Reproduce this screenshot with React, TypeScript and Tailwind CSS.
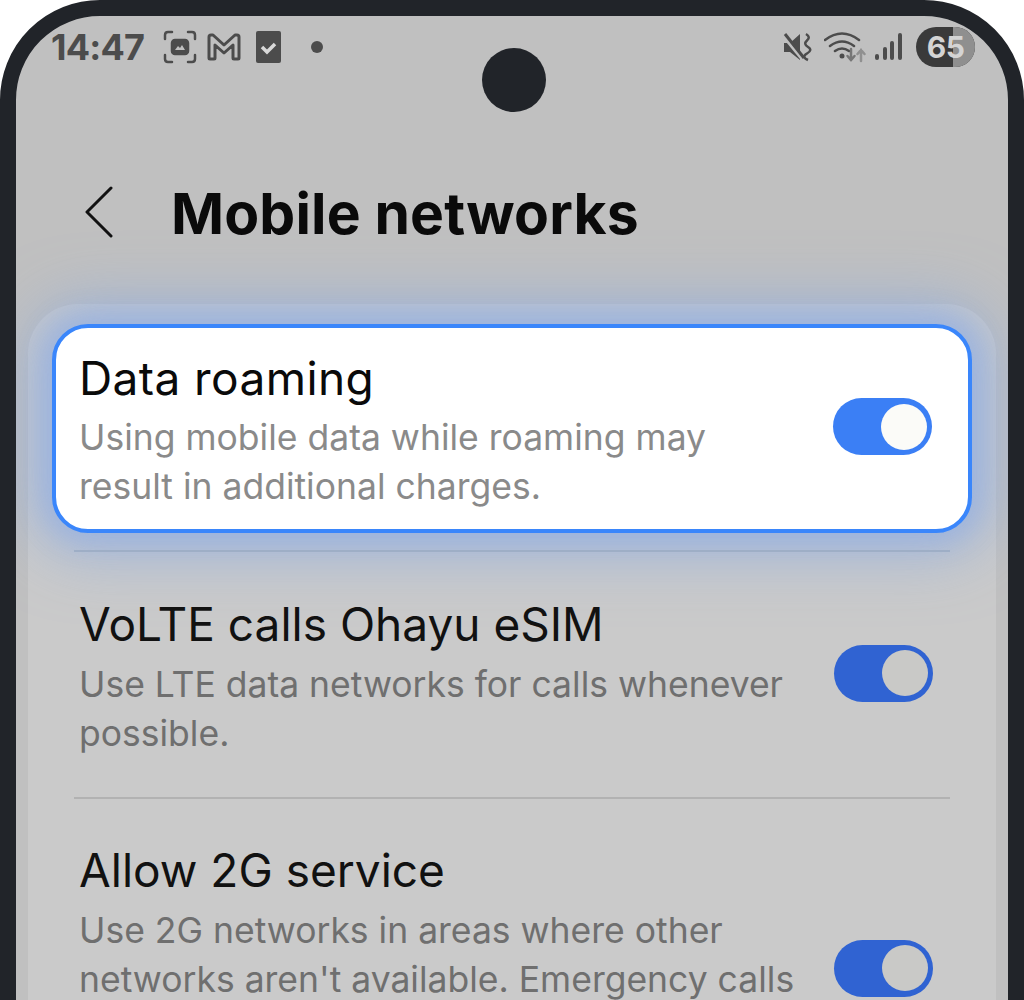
const font = { fontFamily: 'Inter, "Noto Sans", sans-serif' };

function Toggle({ active }: { active?: boolean }) {
  return (
    <div
      className={`mb-[7px] flex h-[57px] w-[99px] shrink-0 items-center justify-end rounded-full pr-[5px] ${
        active ? 'bg-[#3b7ff5]' : 'bg-[#3063d2]'
      }`}
    >
      <div
        className={`h-[46px] w-[46px] rounded-full ${active ? 'bg-[#fbfbf8]' : 'bg-[#c9c9c7]'}`}
      />
    </div>
  );
}

function Row({
  title,
  lines,
  active,
  clipped,
}: {
  title: string;
  lines: string[];
  active?: boolean;
  clipped?: boolean;
}) {
  return (
    <div className="flex items-center justify-between">
      <div>
        <div
          className={`text-[46px] leading-[58px] ${active ? 'mb-[6px] tracking-[0.4px] text-[#0a0a0a]' : 'mb-[7px] text-[#111111]'}`}
        >
          {title}
        </div>
        {lines.map((l) => (
          <div
            key={l}
            className={`text-[35.5px] leading-[49px] ${active ? 'text-[#8a8a8a]' : 'text-[#6f6f6f]'}`}
          >
            {l}
          </div>
        ))}
        {/* rest of the description runs off the bottom of the shot */}
        {clipped && <div className="h-[98px]" />}
      </div>
      <Toggle active={active} />
    </div>
  );
}

function StatusLeft() {
  return (
    <div className="flex items-center text-[#4c4c4c]">
      <span className="w-[112px] text-[36px] font-bold leading-none tracking-[-0.8px]">14:47</span>
      <svg width="34" height="34" viewBox="0 0 34 34" fill="none" stroke="currentColor" strokeWidth="2.5" strokeLinecap="round">
        <path d="M2 9V5q0-3 3-3h4M25 2h4q3 0 3 3v4M32 25v4q0 3-3 3h-4M9 32H5q-3 0-3-3v-4" />
        <rect x="9" y="10" width="16" height="14" rx="3" fill="currentColor" />
        <path d="M12 20l3-4 2 2 2-3 3 5z" fill="#c0c0c0" stroke="none" />
      </svg>
      <svg className="ml-[10px]" width="34" height="28" viewBox="0 0 34 28" fill="none" stroke="currentColor" strokeWidth="3" strokeLinejoin="round">
        <path d="M2 4q0-2 2-2h2l11 10L28 2h2q2 0 2 2v21q0 1-1 1h-4q-1 0-1-1V12l-9 8-9-8v13q0 1-1 1H3q-1 0-1-1z" />
      </svg>
      <svg className="ml-[15px]" width="25" height="32" viewBox="0 0 25 32">
        <rect width="25" height="32" rx="2" fill="currentColor" />
        <path d="M6 16l5 5 8-8" fill="none" stroke="#d8d8d8" strokeWidth="3.5" />
      </svg>
      <div className="ml-[30px] h-[12px] w-[12px] rounded-full bg-[#4c4c4c]" />
    </div>
  );
}

function StatusRight() {
  return (
    <div className="flex items-center text-[#4c4c4c]">
      <svg width="30" height="30" viewBox="0 0 30 30" fill="none">
        <path d="M1 11h6l10-9v26L7 20H1z" fill="currentColor" />
        <path d="M0 4l19 23" stroke="#c0c0c0" strokeWidth="3" />
        <path d="M2 2l19 24" stroke="currentColor" strokeWidth="3" />
        <path d="M23 2q5 3 1 6.500t1 6.500-1 6.500 1 6.500" stroke="currentColor" strokeWidth="2.500" />
      </svg>
      <svg className="ml-[11px]" width="42" height="32" viewBox="0 0 42 32" fill="none" strokeLinecap="round">
        <path d="M1 9q17-13 34 0M6 15q12-9 24 0M11 20q7-5 14 0" stroke="currentColor" strokeWidth="2.5" />
        <circle cx="18" cy="25" r="2.5" fill="currentColor" />
        <path d="M27 18v11m-3.500-4l3.500 4 3.500-4" stroke="#777777" strokeWidth="2.500" />
        <path d="M37 30V19m-3.500 4l3.500-4 3.500 4" stroke="#909090" strokeWidth="2.500" />
      </svg>
      <svg className="ml-[9px]" width="27" height="28" viewBox="0 0 27 28" fill="currentColor">
        <rect x="0" y="21" width="4" height="6" rx="2" />
        <rect x="8" y="14" width="4" height="13" rx="2" />
        <rect x="15" y="8" width="4" height="19" rx="2" />
        <rect x="23" y="0" width="4" height="27" rx="2" />
      </svg>
      <div className="relative ml-[14px] flex h-[40px] w-[59px] items-center justify-center overflow-hidden rounded-full bg-[#3a3a3a]">
        <div className="absolute inset-y-0 right-0 w-[22px] bg-[#8f8f8f]" />
        <span className="relative text-[30px] font-bold leading-none tracking-[-0.5px] text-[#d4d4d4]">65</span>
      </div>
    </div>
  );
}

export default function App() {
  return (
    <div className="h-[1000px] w-[1024px] overflow-hidden bg-white" style={font}>
      <div className="relative h-[1200px] overflow-hidden rounded-t-[100px] border-[16px] border-[#212429] bg-[#c0c0c0]">
        {/* camera hole */}
        <div className="absolute left-[466px] top-[32px] h-[64px] w-[64px] rounded-full bg-[#212429]" />

        <div className="flex items-center justify-between pl-[35px] pr-[33px] pt-[11px]">
          <StatusLeft />
          <StatusRight />
        </div>

        <div className="mt-[117px] flex items-center pl-[69px]">
          <svg className="mb-[4px]" width="28" height="52" viewBox="0 0 28 52" fill="none" stroke="#111111" strokeWidth="3" strokeLinecap="round" strokeLinejoin="round">
            <path d="M26 2L2 26l24 24" />
          </svg>
          <h1 className="ml-[58px] text-[57px] font-bold leading-[60px] tracking-[0.15px] text-[#0a0a0a]">
            Mobile networks
          </h1>
        </div>

        <div className="mx-[12px] mt-[60px] rounded-t-[50px] bg-[#cacaca] pt-[20px]">
          <div className="mx-[24px] rounded-[36px] border-[4px] border-[#3a86fb] bg-white pb-[18px] pl-[23px] pr-[36px] pt-[21px] shadow-[0_0_24px_10px_rgba(135,170,235,0.35),0_0_60px_22px_rgba(135,170,230,0.6)]">
            <Row active title="Data roaming" lines={['Using mobile data while roaming may', 'result in additional charges.']} />
          </div>

          <div className="relative mx-[46px] mt-[17px] h-[2px] bg-[#9eaec6]" />

          <div className="relative pl-[51px] pr-[63px] pt-[43px]">
            <Row title="VoLTE calls Ohayu eSIM" lines={['Use LTE data networks for calls whenever', 'possible.']} />
          </div>

          <div className="mx-[46px] mt-[39px] h-[2px] bg-[#b2b2b2]" />

          <div className="pl-[51px] pr-[63px] pt-[42px]">
            <Row clipped title="Allow 2G service" lines={['Use 2G networks in areas where other', "networks aren't available. Emergency calls"]} />
          </div>
        </div>
      </div>
    </div>
  );
}
